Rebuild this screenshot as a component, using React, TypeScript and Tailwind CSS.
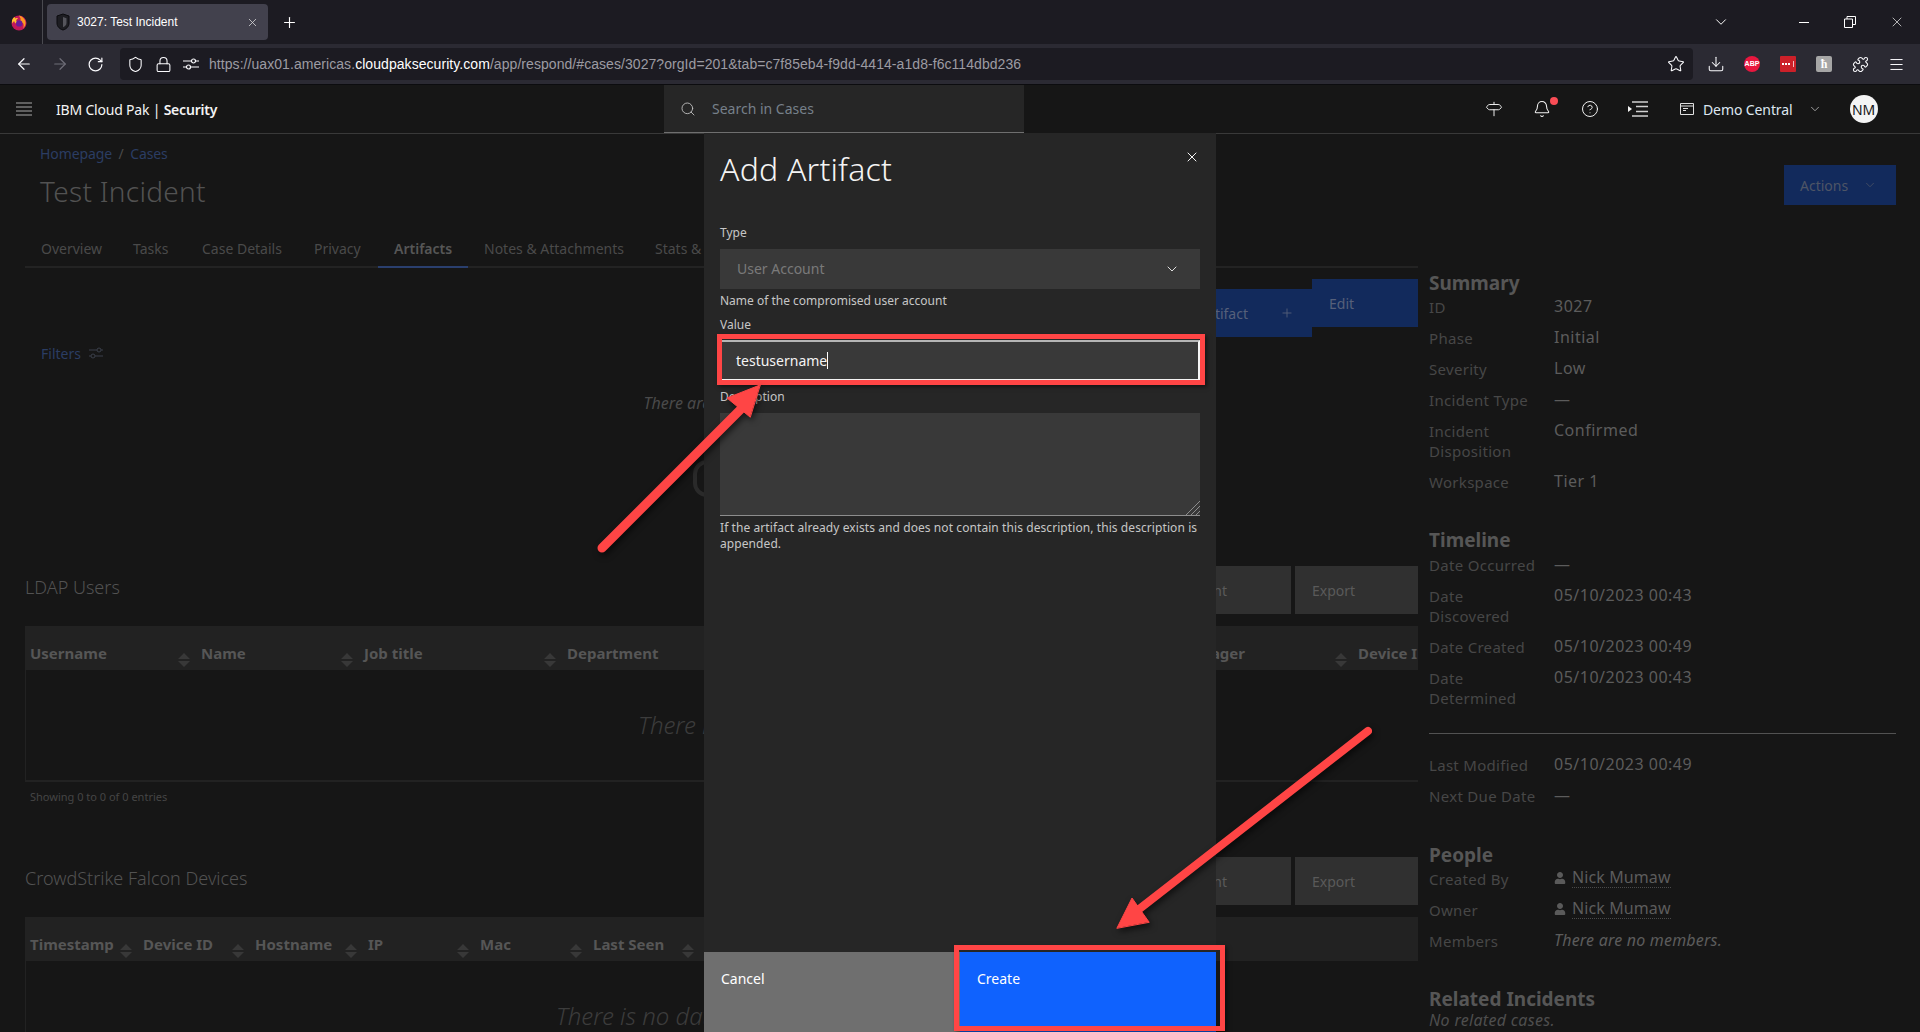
import React from 'react';
import {
  ArrowLeft,
  ArrowRight,
  Bell,
  ChevronDown,
  CircleHelp,
  Download,
  Lock,
  Menu,
  Plus,
  Puzzle,
  RotateCw,
  Search,
  Shield,
  Signpost,
  Star,
  X,
} from 'lucide-react';
import { FaUser } from 'react-icons/fa';

const plex = "font-['Noto_Sans',sans-serif]";

const ldapColumns = [
  { label: 'Username', width: 'w-[171px]' },
  { label: 'Name', width: 'w-[163px]' },
  { label: 'Job title', width: 'w-[203px]' },
  { label: 'Department', width: 'w-[611px]' },
  { label: 'Manager', width: 'w-[180px]' },
  { label: 'Device ID', width: 'w-[160px]' },
];

const deviceColumns = [
  { label: 'Timestamp', width: 'w-[113px]' },
  { label: 'Device ID', width: 'w-[112px]' },
  { label: 'Hostname', width: 'w-[113px]' },
  { label: 'IP', width: 'w-[112px]' },
  { label: 'Mac', width: 'w-[113px]' },
  { label: 'Last Seen', width: 'w-[112px]' },
];

const tabs = [
  { label: 'Overview', width: 'w-[92px]' },
  { label: 'Tasks', width: 'w-[69px]' },
  { label: 'Case Details', width: 'w-[112px]' },
  { label: 'Privacy', width: 'w-[80px]' },
  { label: 'Artifacts', width: 'w-[90px]' },
  { label: 'Notes & Attachments', width: 'w-[171px]' },
  { label: 'Stats & Insights', width: 'w-[150px]' },
];

const SortIcon = () => (
  <svg width="12" height="14" viewBox="0 0 12 14" className="shrink-0 translate-y-[7px]">
    <path d="M6 0 12 6H0Z M0 8H12L6 14Z" fill="#383838" />
  </svg>
);

const TableHeader = ({ columns }: { columns: { label: string; width: string }[] }) => (
  <div className="flex h-[44px] w-[1393px] overflow-hidden bg-[#222222]">
    {columns.map((col) => (
      <div
        key={col.label + col.width}
        className={`${col.width} flex shrink-0 items-center justify-between pl-[5px] pr-[6px] pt-[10px]`}
      >
        <span className="whitespace-nowrap text-[15px] font-bold text-[#565656]">{col.label}</span>
        <SortIcon />
      </div>
    ))}
  </div>
);

const TableBlock = ({
  title,
  action,
  columns,
  empty,
}: {
  title: string;
  action: string;
  columns: { label: string; width: string }[];
  empty: string;
}) => (
  <div>
    <div className="flex h-[48px] items-start justify-between">
      <h2 className="mt-[8px] h-[26px] text-[18px] font-light leading-[26px] text-[#525252]">{title}</h2>
      <div className="flex gap-[4px]">
        <button className="flex h-[48px] w-[180px] items-center justify-end bg-[#303030] pr-[64px] text-[14px] text-[#5a5a5a]">
          {action}
        </button>
        <button className="flex h-[48px] w-[123px] items-center bg-[#303030] pl-[17px] text-[14px] text-[#5a5a5a]">
          Export
        </button>
      </div>
    </div>
    <div className="mt-[12px]">
      <TableHeader columns={columns} />
      <div className="flex h-[112px] items-center justify-center border-b-2 border-l border-[#222222] text-[24px] font-light italic text-[#3c3c3c]">
        {empty}
      </div>
    </div>
  </div>
);

const Row = ({ label, children }: { label: string; children: React.ReactNode }) => (
  <div className="mb-[11px] flex leading-[20px]">
    <div className="w-[125px] shrink-0 pr-[10px] text-[15px] tracking-[0.3px] text-[#474747]">{label}</div>
    <div className="-mt-[1px] text-[16px] tracking-[0.5px] text-[#5c5c5c]">{children}</div>
  </div>
);

const Heading = ({ children, className }: { children: React.ReactNode; className: string }) => (
  <h3 className={`h-[24px] text-[19px] font-bold leading-[24px] text-[#565656] ${className}`}>{children}</h3>
);

const Person = () => (
  <span className="flex items-center gap-[6px] tracking-[0.1px]">
    <FaUser size={12} className="text-[#5a5a5a]" />
    <span className="border-b border-dotted border-[#4a4a4a] leading-[19px]">Nick Mumaw</span>
  </span>
);

const Firefox = () => (
  <svg width="18" height="18" viewBox="0 0 18 18">
    <circle cx="9" cy="10" r="7.5" fill="#c2185b" />
    <path d="M9 2.6c3.6 1 6.6 3.6 6.6 7.4 0 2.2-1 4-2.6 5.2 1-1.6 1-4-.4-5.6-.6 1.4-2 1.2-2.4.2-.4-1.2.6-2.2.4-4.2C9.900 4.600 9.500 3.400 9 2.600Z" fill="#ff9a1f" />
    <path d="M2 7.500c.4-1.600 1.400-3 2.800-3.800-.2.8 0 1.400.4 1.800C6.400 4.900 7.400 5 8 5.400 6.800 6.200 6.200 6.800 6 7.600c1.200 1.400 3.600 1.200 4.600 2.400-.6 1.400-2.400 1.200-3.400 1-1.800-.4-3-1.600-3-3-.8.600-1.400 1.400-1.600 2.400C2.200 9.600 1.800 8.600 2 7.500Z" fill="#ffbd2e" />
    <circle cx="9.200" cy="10.400" r="3.200" fill="#6a1b9a" />
  </svg>
);

const Favicon = () => (
  <svg width="14" height="18" viewBox="0 0 14 18">
    <path d="M7 1 13 3V10C13 13.500 10.500 16 7 17 3.500 16 1 13.500 1 10V3Z" fill="#1d1d22" stroke="#0b0b0e" />
    <path d="M7 4 10.500 5.200V10C10.500 12 9 13.500 7 14.200Z" fill="#55555c" />
  </svg>
);

const Browser = () => (
  <>
    <div className={`flex h-[44px] items-center bg-[#1c1b22] font-['Liberation_Sans',sans-serif] text-white`}>
      <div className="flex h-full w-[43px] shrink-0 items-center justify-center border-r border-[#4a4a50] pr-[4px]">
        <Firefox />
      </div>
      <div className="ml-[4px] flex h-[36px] w-[221px] items-center rounded-[4px] bg-[#42414d] pl-[9px] pr-[9px]">
        <Favicon />
        <span className="ml-[7px] flex-1 text-[12px]">3027: Test Incident</span>
        <X size={13} strokeWidth={1.5} className="text-[#d5d5d8]" />
      </div>
      <Plus size={17} strokeWidth={1.6} className="ml-[13px]" />
      <div className="ml-auto flex items-center text-white">
        <ChevronDown size={18} strokeWidth={1.3} />
        <div className="ml-[69px] h-[1px] w-[10px] bg-white" />
        <svg width="12" height="12" viewBox="0 0 12 12" className="ml-[35px]" fill="none" stroke="#fff">
          <path d="M.5 3h8v8.500h-8zM3 3V.5h8.500V8.500H8.500" />
        </svg>
        <X size={16} strokeWidth={1} className="ml-[33px] mr-[15px]" />
      </div>
    </div>
    <div className="flex h-[41px] items-center border-b border-[#0c0c0f] bg-[#2b2a33] text-[#fbfbfe]">
      <div className="flex w-[120px] shrink-0 items-center pl-[15px]">
        <ArrowLeft size={18} strokeWidth={1.6} />
        <ArrowRight size={18} strokeWidth={1.6} className="ml-[18px] text-[#6f6e78]" />
        <RotateCw size={17} strokeWidth={1.7} className="ml-[18px]" />
      </div>
      <div className="flex h-[32px] w-[1573px] shrink-0 items-center rounded-[4px] bg-[#1c1b22] pl-[7px] pr-[8px]">
        <Shield size={17} strokeWidth={1.5} />
        <Lock size={17} strokeWidth={1.5} className="ml-[11px]" />
        <svg width="16" height="14" viewBox="0 0 16 14" className="ml-[11px]" fill="none" stroke="#fbfbfe" strokeWidth="1.200">
          <path d="M0 4h8M13 4h3M0 10h3M8 10h8" />
          <circle cx="10.500" cy="4" r="2" />
          <circle cx="5.500" cy="10" r="2" />
        </svg>
        <span className="ml-[10px] flex-1 whitespace-nowrap font-['Liberation_Sans',sans-serif] text-[14px] tracking-[0.06px] text-[#9c9ba3]">
          https://uax01.americas.<span className="text-white">cloudpaksecurity.com</span>
          /app/respond/#cases/3027?orgId=201&amp;tab=c7f85eb4-f9dd-4414-a1d8-f6c114dbd236
        </span>
        <Star size={18} strokeWidth={1.4} />
      </div>
      <div className="flex flex-1 items-center pl-[14px]">
        <Download size={18} strokeWidth={1.4} />
        <div className="ml-[19px] flex h-[16px] w-[16px] items-center justify-center rounded-full bg-[#e8173f] font-['Liberation_Sans',sans-serif] text-[7px] font-bold text-white">
          ABP
        </div>
        <div className="ml-[20px] flex h-[16px] w-[16px] items-center justify-center gap-[1px] rounded-[1px] bg-[#cc2029]">
          <span className="h-[2px] w-[2px] bg-white" />
          <span className="h-[2px] w-[2px] bg-white" />
          <span className="h-[2px] w-[2px] bg-white" />
          <span className="ml-[2px] h-[6px] w-[1px] bg-white/70" />
        </div>
        <div className="ml-[20px] flex h-[16px] w-[16px] items-center justify-center rounded-[2px] bg-[#a6a6a6] font-['Liberation_Serif',serif] text-[12px] font-bold leading-none text-white">
          ħ
        </div>
        <Puzzle size={17} strokeWidth={1.5} className="ml-[20px]" />
        <Menu size={17} strokeWidth={1.4} className="ml-[19px]" />
      </div>
    </div>
  </>
);

const AppHeader = () => (
  <header className="flex h-[49px] border-b border-[#393939] bg-[#161616] text-[#f4f4f4]">
    <div className="flex w-[664px] shrink-0 items-center pl-[16px]">
      <svg width="16" height="14" viewBox="0 0 16 14" fill="none" stroke="#a8a8a8">
        <path d="M0 1h16M0 5h16M0 9h16M0 13h16" />
      </svg>
      <span className="ml-[24px] text-[14px] tracking-[-0.2px]">
        IBM Cloud Pak | <span className="font-semibold">Security</span>
      </span>
    </div>
    <div className="flex w-[360px] shrink-0 items-center border-b border-[#6f6f6f] bg-[#262626] pl-[16px]">
      <Search size={16} strokeWidth={1.3} className="text-[#c6c6c6]" />
      <span className="ml-[16px] text-[14px] text-[#76808a]">Search in Cases</span>
    </div>
    <div className="flex flex-1 items-center pl-[461px]">
      <Signpost size={18} strokeWidth={1.3} />
      <div className="relative ml-[30px]">
        <Bell size={18} strokeWidth={1.4} />
        <span className="absolute -right-[7px] -top-[3px] h-[8px] w-[8px] rounded-full bg-[#fa4d56]" />
      </div>
      <CircleHelp size={18} strokeWidth={1.3} className="ml-[30px]" />
      <svg width="20" height="16" viewBox="0 0 20 16" className="ml-[29px]" fill="none" stroke="#d0d0d0" strokeWidth="1.500">
        <path d="M4 1h16M8 5.500h12M8 10.500h12M4 15h16" />
        <path d="M0 5v6l4-3z" fill="#f4f4f4" stroke="none" />
      </svg>
      <svg width="14" height="12" viewBox="0 0 14 12" className="ml-[32px]" fill="none" stroke="#e0e0e0">
        <path d="M.5.500h13v11H.5zM.5 3h13M3 5.500h5M3 7.500h3" />
      </svg>
      <span className="ml-[9px] text-[14px] tracking-[-0.1px] text-[#dde6f0]">Demo Central</span>
      <ChevronDown size={14} strokeWidth={1.3} className="ml-[15px] text-[#c6c6c6]" />
      <div className="ml-[28px] flex h-[28px] w-[28px] items-center justify-center rounded-full bg-[#f4f4f4] text-[14px] text-[#161616]">
        NM
      </div>
    </div>
  </header>
);

const CasePage = () => (
  <div className="w-[1418px] shrink-0 pl-[25px]">
    <div className="mt-[10px] h-[20px] pl-[15px] text-[14px] leading-[20px] tracking-[-0.1px] text-[#2b3d63]">
      Homepage <span className="mx-[3px] text-[#4a4a4a]">/</span> Cases
    </div>
    <h1 className="mt-[7px] h-[40px] pl-[15px] text-[28px] font-light leading-[40px] tracking-[0.3px] text-[#525252]">
      Test Incident
    </h1>
    <div className="mt-[20px] flex h-[37px] border-b-2 border-[#232323] text-[14px] text-[#4a4a4a]">
      {tabs.map((tab) => (
        <div
          key={tab.label}
          className={
            tab.label === 'Artifacts'
              ? `${tab.width} relative -mb-[2px] flex shrink-0 items-center whitespace-nowrap border-b-2 border-[#2a3f6e] pl-[16px] font-semibold text-[#565656]`
              : `${tab.width} flex shrink-0 items-center whitespace-nowrap pl-[16px]`
          }
        >
          {tab.label}
        </div>
      ))}
    </div>

    <div className="mt-[11px] flex h-[58px] items-start justify-end">
      <button className="mt-[10px] flex h-[48px] w-[240px] items-center justify-end gap-[32px] bg-[#122a5c] pr-[18px] text-[14px] text-[#56607a]">
        Add Artifact
        <Plus size={14} strokeWidth={1.5} />
      </button>
      <button className="flex h-[48px] w-[106px] items-center bg-[#122a5c] pl-[17px] text-[14px] text-[#56607a]">
        Edit
      </button>
    </div>

    <div className="mt-[6px] flex h-[20px] items-center gap-[8px] pl-[16px] text-[14px] text-[#2b3d63]">
      Filters
      <svg width="14" height="12" viewBox="0 0 14 12" fill="none" stroke="#3a3f4a">
        <path d="M0 3h8M12 3h2M0 9h2M6 9h8" />
        <circle cx="10" cy="3" r="2" />
        <circle cx="4" cy="9" r="2" />
      </svg>
    </div>
    <div className="mt-[30px] h-[20px] text-center text-[16px] italic leading-[20px] text-[#4a4a4a]">
      There are no artifacts.
    </div>
    <div className="mt-[47px] flex h-[37px] justify-center">
      <svg width="58" height="37" viewBox="0 0 58 37" fill="none" stroke="#2a2a2a" strokeWidth="4">
        <rect x="2" y="2" width="54" height="33" rx="12" />
      </svg>
    </div>

    <div className="mt-[69px]">
      <TableBlock title="LDAP Users" action="Add Account" columns={ldapColumns} empty="There is no data" />
    </div>
    <div className="ml-[5px] mt-[7px] h-[16px] text-[11px] leading-[16px] text-[#454545]">
      Showing 0 to 0 of 0 entries
    </div>
    <div className="mt-[52px]">
      <TableBlock
        title="CrowdStrike Falcon Devices"
        action="Add Account"
        columns={deviceColumns}
        empty="There is no data to be displayed"
      />
    </div>
  </div>
);

const Sidebar = () => (
  <aside className="flex-1 pl-[11px] pr-[24px]">
    <div className="flex h-[71px] justify-end pt-[31px]">
      <button className="flex h-[40px] w-[112px] items-center justify-between bg-[#122a5c] pl-[16px] pr-[19px] text-[14px] text-[#4e5566]">
        Actions
        <ChevronDown size={14} strokeWidth={1.3} />
      </button>
    </div>
    <Heading className="mb-[2px] mt-[66px]">Summary</Heading>
    <Row label="ID">3027</Row>
    <Row label="Phase">Initial</Row>
    <Row label="Severity">Low</Row>
    <Row label="Incident Type">—</Row>
    <Row label="Incident Disposition">Confirmed</Row>
    <Row label="Workspace">Tier 1</Row>
    <Heading className="mb-[3px] mt-[36px]">Timeline</Heading>
    <Row label="Date Occurred">—</Row>
    <Row label="Date Discovered">05/10/2023 00:43</Row>
    <Row label="Date Created">05/10/2023 00:49</Row>
    <Row label="Date Determined">05/10/2023 00:43</Row>
    <div className="mb-[21px] mt-[25px] h-[1px] bg-[#525252]" />
    <Row label="Last Modified">05/10/2023 00:49</Row>
    <Row label="Next Due Date">—</Row>
    <Heading className="mb-[2px] mt-[37px]">People</Heading>
    <Row label="Created By"><Person /></Row>
    <Row label="Owner"><Person /></Row>
    <Row label="Members"><i className="tracking-[0.2px]">There are no members.</i></Row>
    <Heading className="mb-[1px] mt-[36px]">Related Incidents</Heading>
    <div className="-mt-[2px] text-[16px] italic leading-[20px] tracking-[0.3px] text-[#4e4e4e]">No related cases.</div>
  </aside>
);

const ArtifactModal = () => (
  <div className="absolute left-[704px] top-[133px] flex h-[899px] w-[512px] flex-col bg-[#262626] text-[#f4f4f4]">
    <div className="flex items-start justify-between px-[16px] pt-[16px]">
      <h2 className="mb-[1px] h-[40px] text-[32px] font-light leading-[40px] tracking-[0.2px]">Add Artifact</h2>
      <X size={16} strokeWidth={1.5} />
    </div>
    <div className="px-[16px] text-[12px] leading-[16px] text-[#c6c6c6]">
      <div className="mt-[35px]">Type</div>
      <div className="mt-[8px] flex h-[40px] items-center justify-between bg-[#393939] pl-[17px] pr-[20px] text-[14px] text-[#7a7a7a]">
        User Account
        <ChevronDown size={16} strokeWidth={1.5} className="text-[#e0e0e0]" />
      </div>
      <div className="mt-[4px]">Name of the compromised user account</div>
      <div className="mt-[8px]">Value</div>
      <div className="mt-[7px] flex h-[41px] items-center border-2 border-[#f4f4f4] border-t-[#b5b5b5] bg-[#393939] pl-[14px] text-[14px] text-[#f4f4f4]">
        testusername
        <span className="h-[17px] w-[1px] bg-white" />
      </div>
      <div className="mt-[8px]">Description</div>
      <div className="relative mt-[8px] h-[103px] border-b border-[#8d8d8d] bg-[#393939]">
        <svg width="14" height="14" viewBox="0 0 14 14" className="absolute bottom-0 right-0" stroke="#8d8d8d">
          <path d="M0 14 14 0M5 14 14 5M10 14 14 10" />
        </svg>
      </div>
      <div className="mt-[4px] tracking-[0.08px]">
        If the artifact already exists and does not contain this description, this description is appended.
      </div>
    </div>
    <div className="mt-auto flex h-[80px] text-[14px] text-white">
      <div className="w-1/2 bg-[#6f6f6f] pl-[17px] pt-[16px]">Cancel</div>
      <div className="w-1/2 bg-[#0f62fe] pl-[17px] pt-[16px]">Create</div>
    </div>
  </div>
);

const Annotations = () => (
  <>
    <div className="absolute left-[717px] top-[334px] h-[51px] w-[488px] border-[5px] border-[#ff4545] shadow-[2px_2px_4px_rgba(0,0,0,0.5)]" />
    <div className="absolute left-[954px] top-[945px] h-[86px] w-[271px] border-[5px] border-[#ff4545] shadow-[2px_2px_4px_rgba(0,0,0,0.5)]" />
    <svg
      width="1920"
      height="1032"
      viewBox="0 0 1920 1032"
      className="pointer-events-none absolute left-0 top-0 drop-shadow-[2px_3px_3px_rgba(0,0,0,0.6)]"
    >
      <g fill="#ff4545" stroke="#ff4545" strokeLinecap="round">
        <path d="M602 548 742 408" strokeWidth="9" fill="none" />
        <path d="M760 385 727 398 750 417Z" strokeWidth="1" />
        <path d="M1368 731 1138 910" strokeWidth="8" fill="none" />
        <path d="M1117 928 1132 898 1149 922Z" strokeWidth="1" />
      </g>
    </svg>
  </>
);

export default function App() {
  return (
    <div className={`relative h-[1032px] w-[1920px] overflow-hidden bg-[#161616] ${plex}`}>
      <Browser />
      <AppHeader />
      <main className="flex">
        <CasePage />
        <Sidebar />
      </main>
      <ArtifactModal />
      <Annotations />
    </div>
  );
}
